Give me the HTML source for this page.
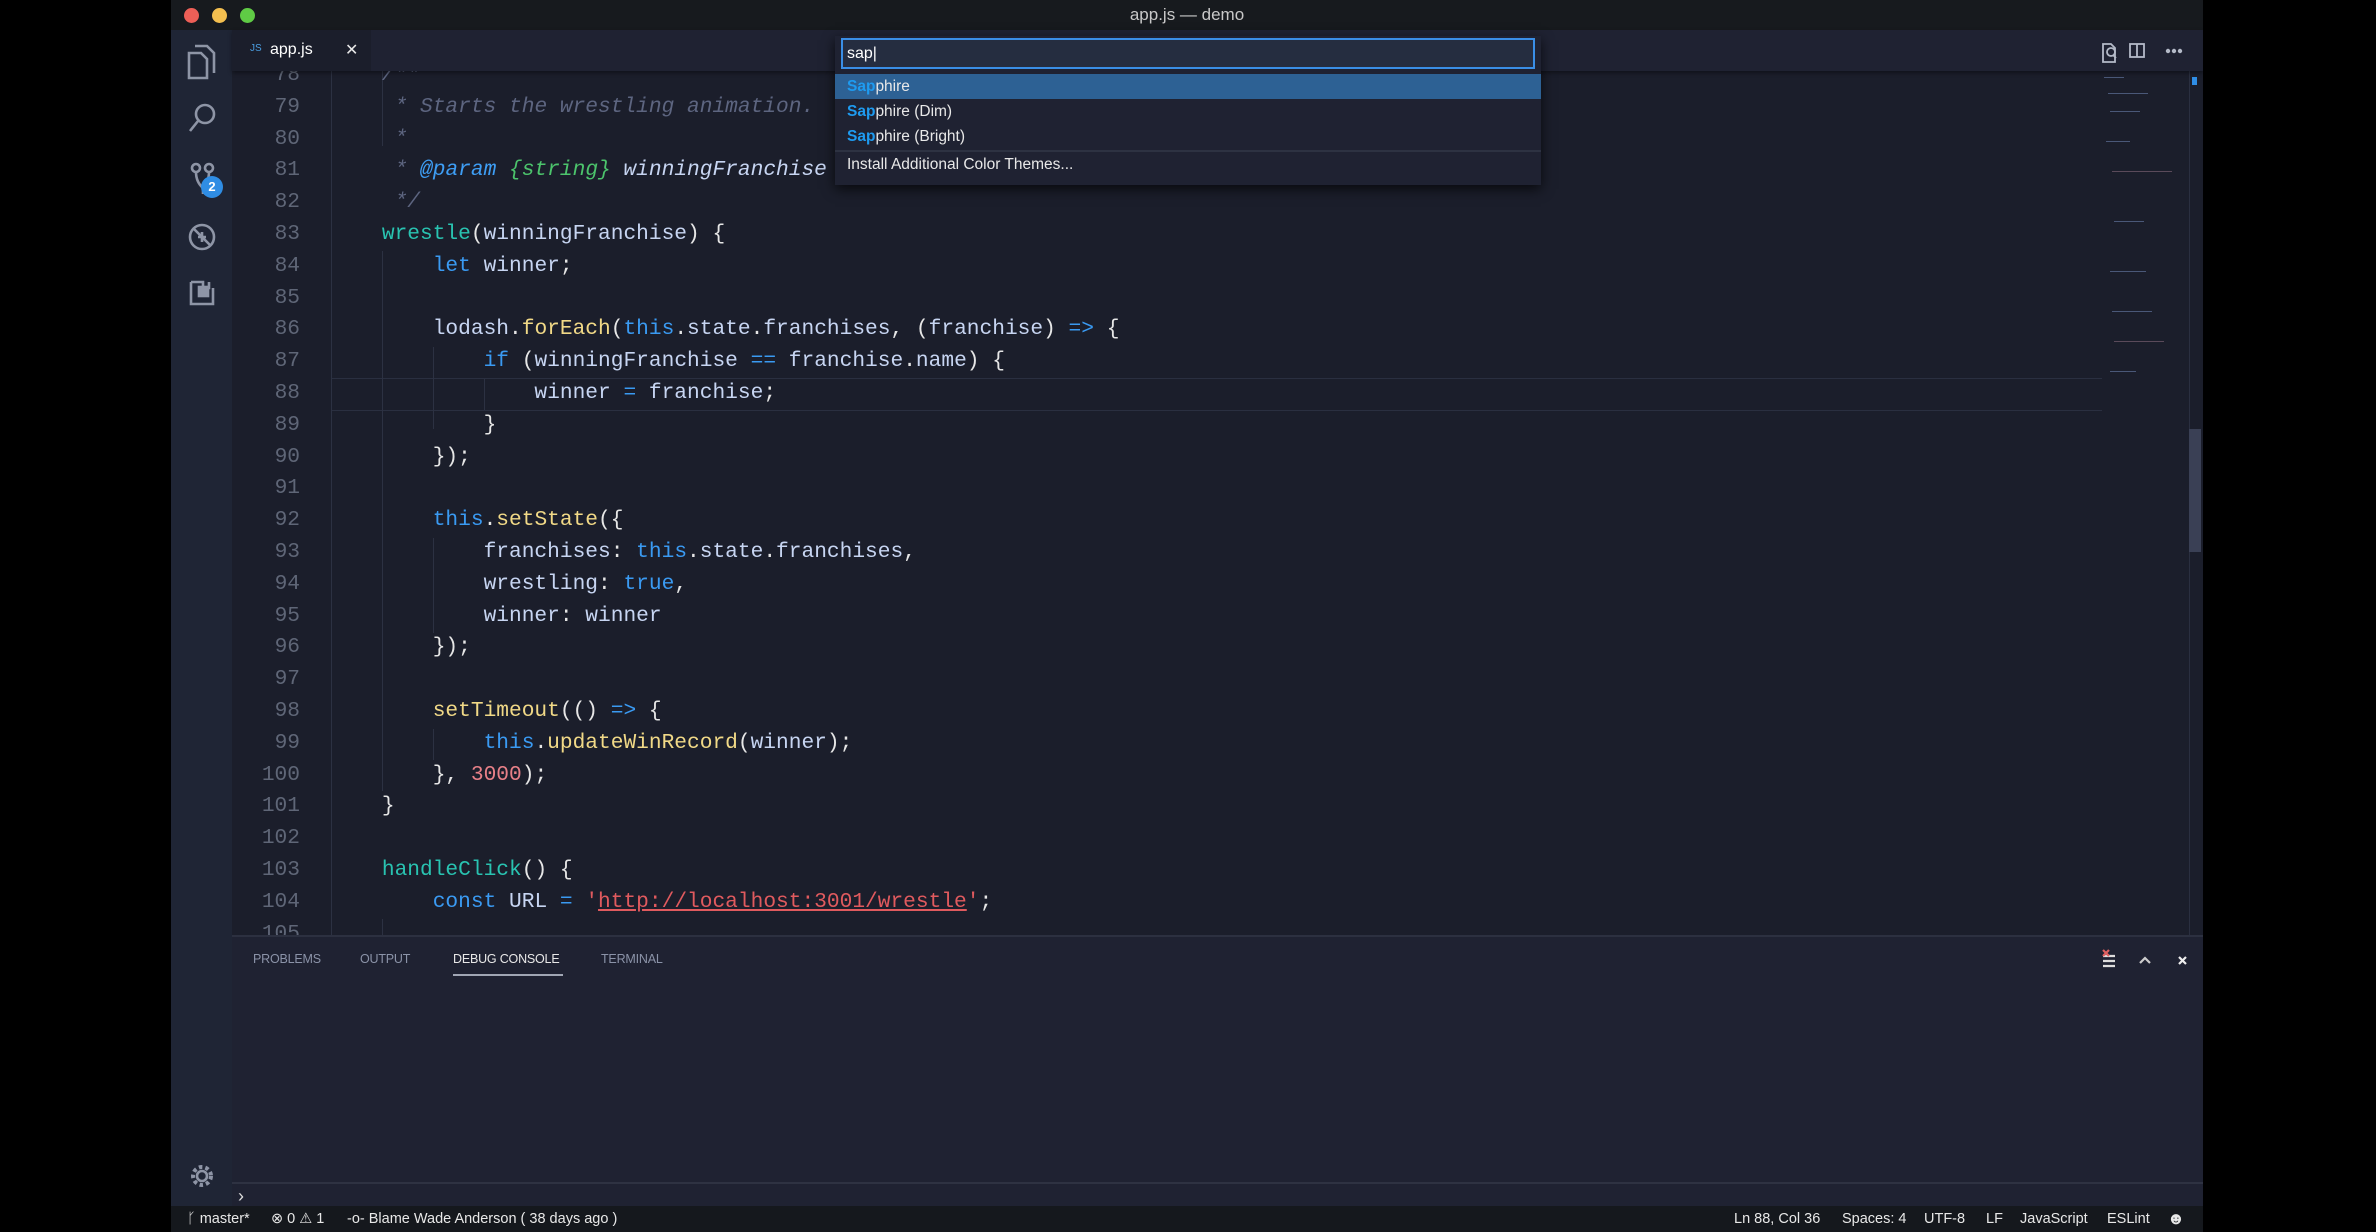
<!DOCTYPE html>
<html><head><meta charset="utf-8"><style>
*{margin:0;padding:0;box-sizing:border-box}
body{width:2376px;height:1232px;background:#000;position:relative;overflow:hidden;font-family:"Liberation Sans",sans-serif}
.win{position:absolute;left:171px;top:0;width:2032px;height:1232px;background:#1b1e2b;overflow:hidden}
.title{position:absolute;left:0;top:0;width:100%;height:30px;background:#171a1e;color:#c8c8c8;font-size:17px;text-align:center;line-height:30px}
.dot{position:absolute;top:8px;width:15px;height:15px;border-radius:50%}
.act{position:absolute;left:0;top:30px;width:61px;height:1176px;background:#1f2535}
.tabs{position:absolute;left:61px;top:30px;right:0;height:41px;background:#1f2232;box-shadow:0 2px 4px rgba(0,0,0,.4);z-index:3}
.tab{position:absolute;left:0;top:0;width:139px;height:41px;background:#1b1e2b}
.editor{position:absolute;left:61px;top:71px;right:0;height:864px;overflow:hidden}
.code{position:absolute;left:0;top:-11px;font-family:"Liberation Mono",monospace;font-size:21.2px;white-space:pre}
.ln{position:absolute;left:0;width:68px;height:31.8px;line-height:31.8px}
.ln .n{position:absolute;right:0;width:80px;text-align:right;color:#5f6677}
.ln .t{position:absolute;left:99px;color:#c7d5f2}
.guide{position:absolute;width:1px;background:#2c3142}
.c{color:#5d6580;font-style:italic}.pt{color:#3e9ef5;font-style:italic}.gs{color:#4cc46c;font-style:italic}.pv{color:#c7d5f2;font-style:italic}
.k{color:#3a9af2}.f{color:#29c3b1}.m{color:#f1d987}.p{color:#e6e6e6}.nu{color:#e88088}.s{color:#e05a5e;text-decoration:underline}
.panel{position:absolute;left:61px;top:935px;right:0;height:271px;background:#1f2232;border-top:2px solid #2c3040}
.ptab{position:absolute;top:15px;font-size:12.5px;color:#8b93a8;letter-spacing:-0.2px}
.status{position:absolute;left:0;top:1206px;width:100%;height:26px;background:#15181d;color:#e8e8e8;font-size:14.5px;line-height:26px}
.qp{position:absolute;left:664px;top:36px;width:706px;height:149px;background:#1f2232;box-shadow:0 4px 12px rgba(0,0,0,.7);z-index:5}
.qi{position:absolute;left:6px;top:2px;width:694px;height:31px;background:#252d40;border:2px solid #3a8ee6;color:#fff;font-size:16px;line-height:27px;padding-left:4px}
.qr{position:absolute;left:0;width:706px;height:25px;line-height:25px;font-size:15.5px;color:#e8e8e8;padding-left:12px}
.hl{color:#1e9bf0;font-weight:bold}
.mm{position:absolute;height:1px;background:#4a5878}
</style></head><body>
<div class="win">
<div class="title">app.js — demo
<div class="dot" style="left:13px;background:#ed5f57"></div><div class="dot" style="left:41px;background:#f4bf4f"></div><div class="dot" style="left:69px;background:#5fcb45"></div></div>

<div class="act">
<svg width="61" height="1176" fill="none" stroke="#8e95a6" stroke-width="2.6">
<path d="M18 23h12l6 6v19H18z M24 16h12l7 7v20"/>
<circle cx="34" cy="84" r="9"/><path d="M27 91l-8 10"/>
<circle cx="25" cy="138" r="4"/><circle cx="38" cy="138" r="4"/><path d="M25 142q0 10 7 16 M38 142q0 10-7 16 M32 158v6"/>
<circle cx="31" cy="207" r="12"/><path d="M23 199l16 16 M27 207h8 M31 202v10"/>
<path d="M20 252h12v6h6v-6 M20 252v22h22v-16"/>
<rect x="28" y="257" width="9" height="9" fill="#8e95a6"/>
<circle cx="31" cy="1146" r="5"/><circle cx="31" cy="1146" r="9" stroke-dasharray="3.5 3" stroke-width="4"/>
</svg>
<div style="position:absolute;left:30px;top:146px;width:22px;height:22px;border-radius:50%;background:#2f8de4;color:#fff;font-size:13px;font-weight:bold;text-align:center;line-height:22px">2</div>
</div>

<div class="tabs"><div class="tab"><span style="position:absolute;left:18px;top:13px;color:#4a9de0;font-size:10px">JS</span><span style="position:absolute;left:38px;top:11px;color:#fff;font-size:16px">app.js</span><span style="position:absolute;left:113px;top:10px;color:#e8e8e8;font-size:16px">✕</span></div>
<svg style="position:absolute;right:0;top:0" width="120" height="41" fill="none" stroke="#b4bac8" stroke-width="1.8"><path d="M20 14h8l4 4v14H20z"/><circle cx="28" cy="22" r="4"/><path d="M30 25l3 3"/><rect x="47" y="14" width="14" height="13"/><path d="M54 14v13"/><circle cx="85" cy="21" r="1.3" fill="#b4bac8"/><circle cx="91" cy="21" r="1.3" fill="#b4bac8"/><circle cx="97" cy="21" r="1.3" fill="#b4bac8"/></svg>
</div>

<div class="editor">
<div style="position:absolute;left:100px;top:307px;width:1770px;height:0;border-top:1px solid #2a2f40"></div>
<div style="position:absolute;left:100px;top:339px;width:1770px;height:0;border-top:1px solid #2a2f40"></div>
<div class="guide" style="left:99px;top:0;height:864px"></div>
<div class="guide" style="left:150px;top:0;height:75px"></div>
<div class="guide" style="left:150px;top:180px;height:540px"></div>
<div class="guide" style="left:201px;top:276px;height:82px"></div>
<div class="guide" style="left:252px;top:308px;height:31px"></div>
<div class="guide" style="left:201px;top:467px;height:95px"></div>
<div class="guide" style="left:201px;top:658px;height:31px"></div>
<div class="guide" style="left:150px;top:848px;height:30px"></div>
<div class="code">
<div class="ln" style="top:0"><span class="n">78</span><span class="t">    <span class="c">/**</span></span></div>
<div class="ln" style="top:31.8px"><span class="n">79</span><span class="t">     <span class="c">* Starts the wrestling animation.</span></span></div>
<div class="ln" style="top:63.6px"><span class="n">80</span><span class="t">     <span class="c">*</span></span></div>
<div class="ln" style="top:95.4px"><span class="n">81</span><span class="t">     <span class="c">* </span><span class="pt">@param</span> <span class="gs">{string}</span> <span class="pv">winningFranchise</span></span></div>
<div class="ln" style="top:127.2px"><span class="n">82</span><span class="t">     <span class="c">*/</span></span></div>
<div class="ln" style="top:159px"><span class="n">83</span><span class="t">    <span class="f">wrestle</span><span class="p">(</span>winningFranchise<span class="p">) {</span></span></div>
<div class="ln" style="top:190.8px"><span class="n">84</span><span class="t">        <span class="k">let</span> winner<span class="p">;</span></span></div>
<div class="ln" style="top:222.6px"><span class="n">85</span><span class="t"></span></div>
<div class="ln" style="top:254.4px"><span class="n">86</span><span class="t">        lodash<span class="p">.</span><span class="m">forEach</span><span class="p">(</span><span class="k">this</span><span class="p">.</span>state<span class="p">.</span>franchises<span class="p">, (</span>franchise<span class="p">)</span> <span class="k">=&gt;</span> <span class="p">{</span></span></div>
<div class="ln" style="top:286.2px"><span class="n">87</span><span class="t">            <span class="k">if</span> <span class="p">(</span>winningFranchise <span class="k">==</span> franchise<span class="p">.</span>name<span class="p">) {</span></span></div>
<div class="ln" style="top:318px"><span class="n">88</span><span class="t">                winner <span class="k">=</span> franchise<span class="p">;</span></span></div>
<div class="ln" style="top:349.8px"><span class="n">89</span><span class="t">            <span class="p">}</span></span></div>
<div class="ln" style="top:381.6px"><span class="n">90</span><span class="t">        <span class="p">});</span></span></div>
<div class="ln" style="top:413.4px"><span class="n">91</span><span class="t"></span></div>
<div class="ln" style="top:445.2px"><span class="n">92</span><span class="t">        <span class="k">this</span><span class="p">.</span><span class="m">setState</span><span class="p">({</span></span></div>
<div class="ln" style="top:477px"><span class="n">93</span><span class="t">            franchises<span class="p">:</span> <span class="k">this</span><span class="p">.</span>state<span class="p">.</span>franchises<span class="p">,</span></span></div>
<div class="ln" style="top:508.8px"><span class="n">94</span><span class="t">            wrestling<span class="p">:</span> <span class="k">true</span><span class="p">,</span></span></div>
<div class="ln" style="top:540.6px"><span class="n">95</span><span class="t">            winner<span class="p">:</span> winner</span></div>
<div class="ln" style="top:572.4px"><span class="n">96</span><span class="t">        <span class="p">});</span></span></div>
<div class="ln" style="top:604.2px"><span class="n">97</span><span class="t"></span></div>
<div class="ln" style="top:636px"><span class="n">98</span><span class="t">        <span class="m">setTimeout</span><span class="p">(()</span> <span class="k">=&gt;</span> <span class="p">{</span></span></div>
<div class="ln" style="top:667.8px"><span class="n">99</span><span class="t">            <span class="k">this</span><span class="p">.</span><span class="m">updateWinRecord</span><span class="p">(</span>winner<span class="p">);</span></span></div>
<div class="ln" style="top:699.6px"><span class="n">100</span><span class="t">        <span class="p">},</span> <span class="nu">3000</span><span class="p">);</span></span></div>
<div class="ln" style="top:731.4px"><span class="n">101</span><span class="t">    <span class="p">}</span></span></div>
<div class="ln" style="top:763.2px"><span class="n">102</span><span class="t"></span></div>
<div class="ln" style="top:795px"><span class="n">103</span><span class="t">    <span class="f">handleClick</span><span class="p">() {</span></span></div>
<div class="ln" style="top:826.8px"><span class="n">104</span><span class="t">        <span class="k">const</span> URL <span class="k">=</span> <span class="s" style="text-decoration:none">'</span><span class="s">http://localhost:3001/wrestle</span><span class="s" style="text-decoration:none">'</span><span class="p">;</span></span></div>
<div class="ln" style="top:858.6px"><span class="n">105</span><span class="t"></span></div>
</div>
<div class="mm" style="left:1872px;top:6px;width:20px"></div>
<div class="mm" style="left:1876px;top:22px;width:40px"></div>
<div class="mm" style="left:1878px;top:40px;width:30px"></div>
<div class="mm" style="left:1874px;top:70px;width:24px"></div>
<div class="mm" style="left:1880px;top:100px;width:60px;background:#5a4a5a"></div>
<div class="mm" style="left:1882px;top:150px;width:30px"></div>
<div class="mm" style="left:1878px;top:200px;width:36px"></div>
<div class="mm" style="left:1880px;top:240px;width:40px"></div>
<div class="mm" style="left:1882px;top:270px;width:50px;background:#5a4a5a"></div>
<div class="mm" style="left:1878px;top:300px;width:26px"></div>
<div style="position:absolute;right:0;top:0;width:14px;height:864px;border-left:1px solid #2a2f40"></div>
<div style="position:absolute;right:2px;top:358px;width:12px;height:123px;background:#3a4055"></div>
<div style="position:absolute;right:6px;top:6px;width:5px;height:8px;background:#2f8de4"></div>
</div>

<div class="qp">
<div class="qi">sap|</div>
<div class="qr" style="top:38px;background:#2d6194"><span class="hl">Sap</span>phire</div>
<div class="qr" style="top:63px"><span class="hl">Sap</span>phire (Dim)</div>
<div class="qr" style="top:88px"><span class="hl">Sap</span>phire (Bright)</div>
<div style="position:absolute;left:0;top:114px;width:706px;height:2px;background:#2d3242"></div>
<div class="qr" style="top:116px">Install Additional Color Themes...</div>
</div>

<div class="panel">
<span class="ptab" style="left:21px">PROBLEMS</span>
<span class="ptab" style="left:128px">OUTPUT</span>
<span class="ptab" style="left:221px;color:#e8e8e8">DEBUG CONSOLE</span>
<div style="position:absolute;left:221px;top:37px;width:110px;height:2px;background:#a0a6b4"></div>
<span class="ptab" style="left:369px">TERMINAL</span>
<svg style="position:absolute;right:0;top:8px" width="110" height="30" stroke-width="2.2" fill="none"><path d="M10 11h12M10 16h12M10 21h12" stroke="#ddd"/><path d="M10 5l6 6M16 5l-6 6" stroke="#e06060"/><path d="M47 18l5-5 5 5" stroke="#ccc"/><path d="M86 12l7 7M93 12l-7 7" stroke="#eee"/></svg>
<div style="position:absolute;left:0;top:245px;width:100%;height:2px;background:#2e3242"></div>
<span style="position:absolute;left:6px;top:249px;color:#ddd;font-size:18px">›</span>
</div>

<div class="status">
<span style="position:absolute;left:16px">ᚴ master*</span>
<span style="position:absolute;left:100px">⊗ 0 ⚠ 1</span>
<span style="position:absolute;left:176px">-o- Blame Wade Anderson ( 38 days ago )</span>
<span style="position:absolute;left:1563px">Ln 88, Col 36</span>
<span style="position:absolute;left:1671px">Spaces: 4</span>
<span style="position:absolute;left:1753px">UTF-8</span>
<span style="position:absolute;left:1815px">LF</span>
<span style="position:absolute;left:1849px">JavaScript</span>
<span style="position:absolute;left:1936px">ESLint</span>
<span style="position:absolute;left:1996px;font-size:17px">☻</span>
</div>
</div>
</body></html>
